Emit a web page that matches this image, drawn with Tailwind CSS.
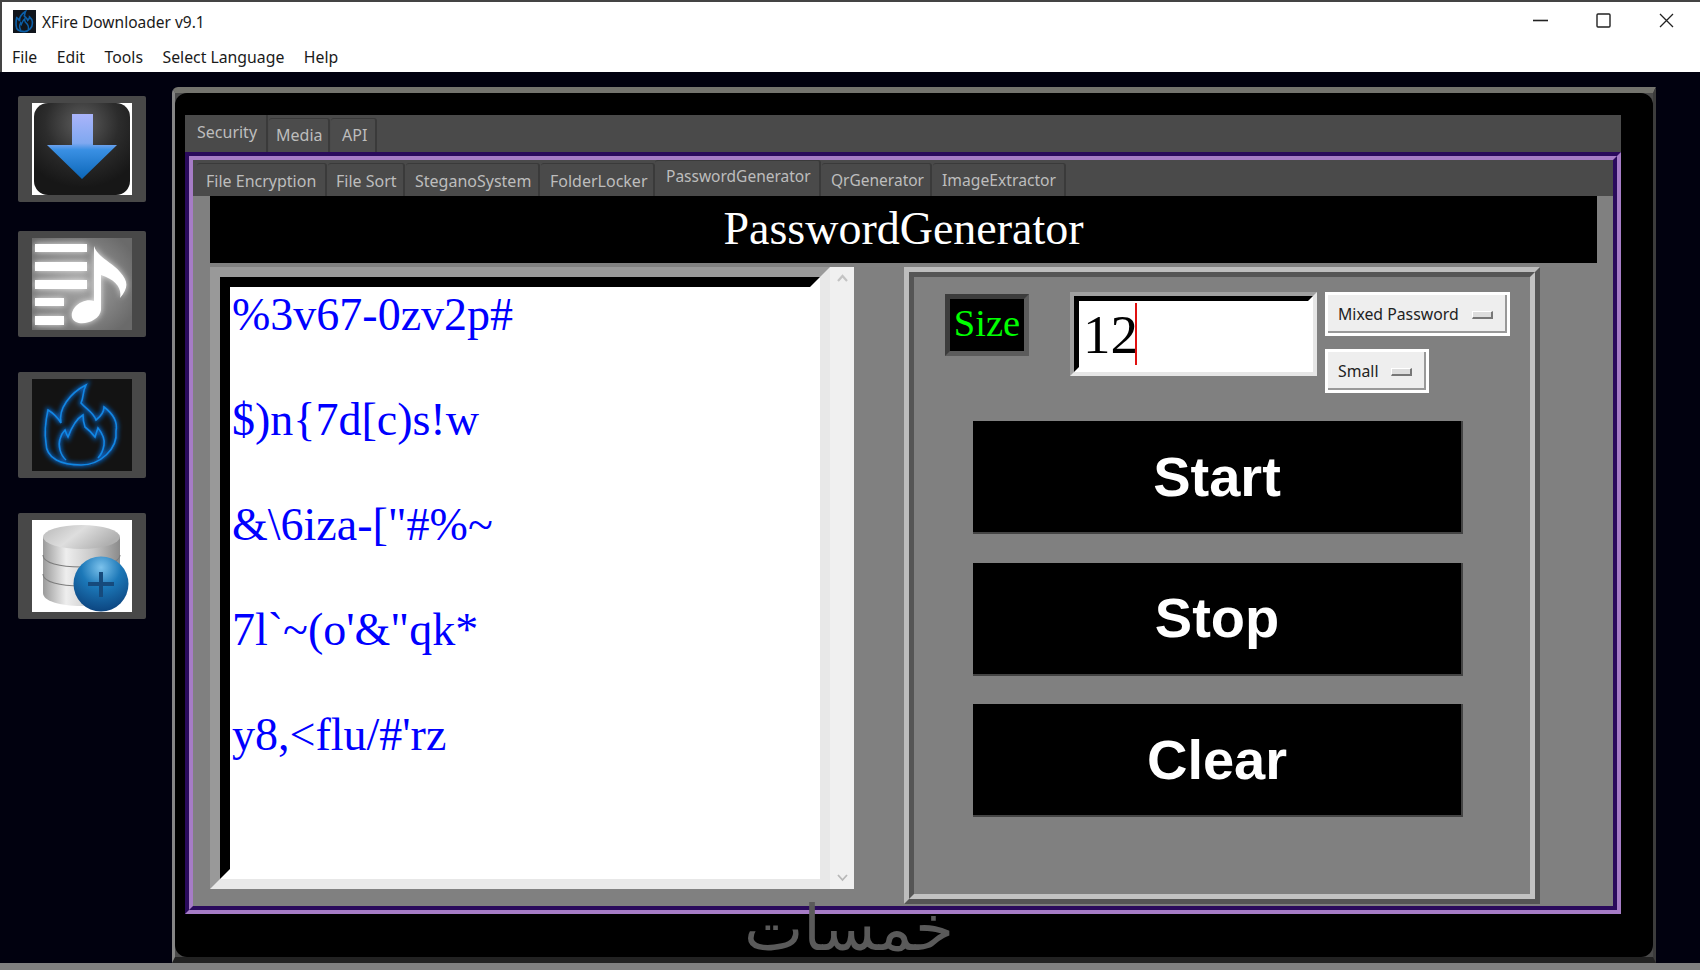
<!DOCTYPE html>
<html lang="en">
<head>
    <meta charset="utf-8" />
    <title>XFire Downloader v9.1</title>
    <script src="https://cdn.jsdelivr.net/npm/@tailwindcss/browser@4"></script>
</head>
<body class="bg-[#01010f]">
<div class="w-[1700px] h-[970px] flex flex-col overflow-hidden relative bg-[#01010f] font-['Noto_Sans',sans-serif]">

    <!-- title bar + menu -->
    <div class="h-[72px] shrink-0 bg-white border-t-2 border-l-2 border-[#444] text-[#1a1a1a]">
        <div class="h-[38px] flex items-center pl-[11px]">
            <svg class="w-[23px] h-[23px]" viewBox="0 0 100 92" preserveAspectRatio="none">
                <rect width="100" height="92" fill="#10151c" />
                <path d="M49 86C30 86 14 80 14 64C12 52 14 40 16 31C21 34 26 39 29 44C26 30 38 14 54 6C50 14 52 18 49 24C54 30 62 34 64 41C68 38 72 34 72 28C80 34 86 42 84 52C86 70 68 86 49 86Z" fill="none" stroke="#0b5fa8" stroke-width="7" />
                <path d="M34 81C28 72 28 60 33 51C34 54 35 56 36 58C39 50 44 40 51 36C51 42 52 45 53 48C60 54 72 60 66 79" fill="none" stroke="#0b5fa8" stroke-width="6" />
            </svg>
            <span class="ml-[6px] mt-[3px] text-[15.500px]">XFire Downloader v9.1</span>
        </div>
        <div class="h-[32px] flex items-center pl-[10px] pt-[4px] gap-[19.500px] text-[15.800px]">
            <span>File</span><span>Edit</span><span>Tools</span><span>Select Language</span><span>Help</span>
        </div>
        <div class="absolute top-[2px] right-0 h-[36px] flex items-center pr-[26px] gap-[47px]">
            <svg class="w-[15px] h-[15px] mr-[1px]" viewBox="0 0 15 15"><path d="M0 7.500H15" stroke="#222" stroke-width="1.600" /></svg>
            <svg class="w-[15px] h-[15px] mr-[1px]" viewBox="0 0 15 15"><rect x="1" y="1" width="13" height="13" rx="1" fill="none" stroke="#222" stroke-width="1.400" /></svg>
            <svg class="w-[15px] h-[15px]" viewBox="0 0 15 15"><path d="M1 1L14 14M14 1L1 14" stroke="#222" stroke-width="1.300" /></svg>
        </div>
    </div>

    <div class="flex flex-1 min-h-0">
        <!-- left toolbar -->
        <div class="w-[172px] shrink-0 pl-[18px] pt-[24px]">
            <div class="w-[128px] h-[106px] bg-[#484848] rounded-[2px] flex items-center justify-center">
                <svg class="w-[100px] h-[92px]" viewBox="0 0 100 92">
                    <defs>
                        <radialGradient id="dlbg" cx="50%" cy="22%" r="70%">
                            <stop offset="0" stop-color="#5e5e5e" /><stop offset="0.55" stop-color="#2c2c2c" /><stop offset="1" stop-color="#171717" />
                        </radialGradient>
                        <linearGradient id="dlarrow" x1="0" y1="0" x2="0" y2="1">
                            <stop offset="0" stop-color="#aab4fa" /><stop offset="0.45" stop-color="#7fa8f0" /><stop offset="0.55" stop-color="#3a90e4" /><stop offset="1" stop-color="#0b66b8" />
                        </linearGradient>
                    </defs>
                    <rect width="100" height="92" fill="#fff" />
                    <rect x="2" y="0" width="96" height="92" rx="14" fill="url(#dlbg)" />
                    <path d="M40 11H61V42H85L50 76L15 42H40Z" fill="url(#dlarrow)" />
                </svg>
            </div>

            <div class="w-[128px] h-[106px] mt-[29px] bg-[#484848] rounded-[2px] flex items-center justify-center">
                <svg class="w-[100px] h-[92px]" viewBox="0 0 100 92">
                    <defs>
                        <radialGradient id="notebg" cx="45%" cy="50%" r="65%">
                            <stop offset="0" stop-color="#a8a8a8" /><stop offset="1" stop-color="#6a6a6a" />
                        </radialGradient>
                        <filter id="noteglow" x="-20%" y="-20%" width="140%" height="140%"><feGaussianBlur stdDeviation="3" /></filter>
                    </defs>
                    <rect width="100" height="92" fill="url(#notebg)" />
                    <g fill="#fff" filter="url(#noteglow)" opacity="0.8">
                        <rect x="3" y="6" width="52" height="8" /><rect x="3" y="24" width="52" height="9" /><rect x="3" y="42" width="52" height="9" /><rect x="3" y="60" width="29" height="8" /><rect x="3" y="78" width="29" height="9" />
                        <path d="M62 8C66 20 80 24 88 34C97 44 96 50 88 60C90 50 84 42 69 37V72C68 82 52 88 44 84C36 80 40 68 50 64C54 62 59 62 62 63Z" />
                    </g>
                    <g fill="#fff">
                        <rect x="3" y="6" width="52" height="8" /><rect x="3" y="24" width="52" height="9" /><rect x="3" y="42" width="52" height="9" /><rect x="3" y="60" width="29" height="8" /><rect x="3" y="78" width="29" height="9" />
                        <path d="M62 8C66 20 80 24 88 34C97 44 96 50 88 60C90 50 84 42 69 37V72C68 82 52 88 44 84C36 80 40 68 50 64C54 62 59 62 62 63Z" />
                    </g>
                </svg>
            </div>

            <div class="w-[128px] h-[106px] mt-[35px] bg-[#484848] rounded-[2px] flex items-center justify-center">
                <svg class="w-[100px] h-[92px]" viewBox="0 0 100 92">
                    <defs><filter id="fireglow" x="-20%" y="-20%" width="140%" height="140%"><feGaussianBlur stdDeviation="2" /></filter></defs>
                    <rect width="100" height="92" fill="#131313" />
                    <g fill="none" stroke="#0a5fb8" stroke-width="4" filter="url(#fireglow)">
                        <path d="M49 86C30 86 14 80 14 64C12 52 14 40 16 31C21 34 26 39 29 44C26 30 38 14 54 6C50 14 52 18 49 24C54 30 62 34 64 41C68 38 72 34 72 28C80 34 86 42 84 52C86 70 68 86 49 86Z" />
                        <path d="M34 81C28 76 26 66 28 60C29 56 31 53 33 51C34 54 35 56 36 58C39 50 44 40 51 36C51 42 52 45 53 48C57 51 60 54 63 58C64 55 65 52 66 49C70 54 73 60 72 66C71 72 69 76 66 79" />
                    </g>
                    <g fill="none" stroke="#1187e4" stroke-width="1.600">
                        <path d="M49 86C30 86 14 80 14 64C12 52 14 40 16 31C21 34 26 39 29 44C26 30 38 14 54 6C50 14 52 18 49 24C54 30 62 34 64 41C68 38 72 34 72 28C80 34 86 42 84 52C86 70 68 86 49 86Z" />
                        <path d="M34 81C28 76 26 66 28 60C29 56 31 53 33 51C34 54 35 56 36 58C39 50 44 40 51 36C51 42 52 45 53 48C57 51 60 54 63 58C64 55 65 52 66 49C70 54 73 60 72 66C71 72 69 76 66 79" />
                    </g>
                </svg>
            </div>

            <div class="w-[128px] h-[106px] mt-[35px] bg-[#484848] rounded-[2px] flex items-center justify-center">
                <svg class="w-[100px] h-[92px]" viewBox="0 0 100 92">
                    <defs>
                        <linearGradient id="dbside" x1="0" y1="0" x2="1" y2="0">
                            <stop offset="0" stop-color="#9a9a9a" /><stop offset="0.3" stop-color="#eee" /><stop offset="0.65" stop-color="#c8c8c8" /><stop offset="1" stop-color="#8a8a8a" />
                        </linearGradient>
                        <linearGradient id="dbtop" x1="0" y1="0" x2="1" y2="0.4">
                            <stop offset="0" stop-color="#b8b8b8" /><stop offset="0.5" stop-color="#dedede" /><stop offset="1" stop-color="#b0b0b0" />
                        </linearGradient>
                        <radialGradient id="dbball" cx="50%" cy="20%" r="80%">
                            <stop offset="0" stop-color="#7cc2ec" /><stop offset="0.45" stop-color="#1c78b8" /><stop offset="1" stop-color="#0c4580" />
                        </radialGradient>
                    </defs>
                    <rect width="100" height="92" fill="#fff" />
                    <path d="M11 17V73C11 81 28 86 49 86C70 86 88 81 88 73V17Z" fill="url(#dbside)" />
                    <path d="M11 35C11 43 28 47 49 47C70 47 88 43 88 35M11 54C11 62 28 66 49 66C70 66 88 62 88 54" fill="none" stroke="#7c7c7c" stroke-width="1.200" />
                    <ellipse cx="49.500" cy="17" rx="38.500" ry="12" fill="url(#dbtop)" />
                    <circle cx="69" cy="64" r="27.500" fill="url(#dbball)" />
                    <path d="M56 64H82M69 52V77" stroke="#164a7c" stroke-width="4" />
                </svg>
            </div>
        </div>

        <!-- main panel -->
        <div class="w-[1484px] h-[876px] mt-[15px] shrink-0 bg-[#4a4a4a] rounded-tl-[6px] border-t-[6px] border-t-[#74746e] border-l-[3px] border-l-[#858585] border-r-[3px] border-r-[#3c3c3c] border-b-[6px] border-b-[#222]">
            <div class="h-full bg-black rounded-[12px] pl-[10px] pt-[22px]">
            <div class="w-[1436px]">

                <!-- outer tabs -->
                <div class="h-[37px] bg-[#4a4a4a] flex items-end text-[16px] text-[#bdbdbd]">
                    <div class="w-[83px] h-[37px] pl-[12px] pt-[5px] border-r-2 border-[#3a3a3a]">Security</div>
                    <div class="w-[61px] h-[34px] ml-px pl-[7px] pt-[4px] bg-[#4c4c4c] border-t border-r-2 border-[#3a3a3a] rounded-t-[3px]">Media</div>
                    <div class="w-[46px] h-[34px] ml-px pl-[11px] pt-[4px] bg-[#4c4c4c] border-t border-r-2 border-[#3a3a3a] rounded-t-[3px]">API</div>
                </div>

                <!-- purple frame -->
                <div class="h-[762px] border-[4px] border-t-[#2a0a5c] border-l-[#2a0a5c] border-r-[#a67cc6] border-b-[#a67cc6]">
                    <div class="h-full border-[4px] border-t-[#a67cc6] border-l-[#a67cc6] border-r-[#2a0a5c] border-b-[#2a0a5c] bg-[#808080]">

                        <!-- inner tabs -->
                        <div class="h-[36px] bg-[#4a4a4a] flex items-end pl-[4px] text-[16px] text-[#bdbdbd]">
                            <div class="w-[130px] h-[33px] pl-[9px] pt-[5px] border-t border-r-2 border-[#3a3a3a] rounded-t-[3px] whitespace-nowrap">File Encryption</div>
                            <div class="w-[77px] h-[33px] ml-[1px] pl-[8px] pt-[5px] border-t border-r-2 border-[#3a3a3a] rounded-t-[3px] whitespace-nowrap">File Sort</div>
                            <div class="w-[134px] h-[33px] ml-[1px] pl-[9px] pt-[5px] border-t border-r-2 border-[#3a3a3a] rounded-t-[3px] whitespace-nowrap">SteganoSystem</div>
                            <div class="w-[114px] h-[33px] ml-[1px] pl-[9px] pt-[5px] border-t border-r-2 border-[#3a3a3a] rounded-t-[3px] whitespace-nowrap">FolderLocker</div>
                            <div class="w-[166px] h-[36px] pl-[11px] pt-[4px] text-[15.500px] border-t border-r-2 border-[#3a3a3a] rounded-t-[3px] whitespace-nowrap">PasswordGenerator</div>
                            <div class="w-[110px] h-[33px] ml-[1px] pl-[9px] pt-[5px] text-[15.500px] border-t border-r-2 border-[#3a3a3a] rounded-t-[3px] whitespace-nowrap">QrGenerator</div>
                            <div class="w-[133px] h-[33px] ml-[1px] pl-[9px] pt-[5px] text-[15.700px] border-t border-r-2 border-[#3a3a3a] rounded-t-[3px] whitespace-nowrap">ImageExtractor</div>
                        </div>

                        <!-- heading -->
                        <div class="h-[67px] w-[1387px] ml-[17px] bg-black text-white text-center text-[46px] leading-[66px] font-['Liberation_Serif',serif]">PasswordGenerator</div>

                        <div class="flex items-start ml-[17px] mt-[4px]">
                            <!-- generated list -->
                            <div class="flex w-[644px] h-[622px]">
                                <div class="w-[620px] h-full border-[10px] border-t-[#999] border-l-[#999] border-r-[#e8e8e8] border-b-[#e8e8e8]">
                                    <div class="h-full border-[10px] border-t-black border-l-black border-r-white border-b-white bg-white pl-[2px] pt-[2px] text-[46px] leading-[52.500px] text-[#0000ff] font-['Liberation_Serif',serif] whitespace-nowrap">
                                        <p class="mb-[52.500px]">%3v67-0zv2p#</p>
                                        <p class="mb-[52.500px]">$)n{7d[c)s!w</p>
                                        <p class="mb-[52.500px]">&amp;\6iza-["#%~</p>
                                        <p class="mb-[52.500px]">7l`~(o'&amp;"qk*</p>
                                        <p>y8,&lt;flu/#'rz</p>
                                    </div>
                                </div>
                                <div class="w-[24px] h-full bg-[#f0f0f0] flex flex-col justify-between items-center py-[7px]">
                                    <svg class="w-[11px] h-[8px]" viewBox="0 0 11 8"><path d="M1 7L5.500 2L10 7" fill="none" stroke="#c4c4c4" stroke-width="2.200" /></svg>
                                    <svg class="w-[11px] h-[8px]" viewBox="0 0 11 8"><path d="M1 1L5.500 6L10 1" fill="none" stroke="#b8b8b8" stroke-width="1.800" /></svg>
                                </div>
                            </div>

                            <!-- controls -->
                            <div class="w-[636px] h-[637px] ml-[50px] border-[5px] border-t-[#bdbdbd] border-l-[#bdbdbd] border-r-[#555] border-b-[#555]">
                                <div class="h-full border-[5px] border-t-[#555] border-l-[#555] border-r-[#c2c2c2] border-b-[#c2c2c2] pl-[59px] pt-[15px]">
                                    <div class="flex items-start">
                                        <div class="w-[84px] h-[62px] mt-[2px] -ml-[28px] border-[5px] border-t-[#3c3c3c] border-l-[#3c3c3c] border-r-[#5c5c5c] border-b-[#5c5c5c] bg-black text-[#00ff00] text-[38.500px] leading-[48px] text-center font-['Liberation_Serif',serif] overflow-hidden">Size</div>
                                        <div class="w-[247px] h-[84px] ml-[41px] border-[4px] border-t-[#a0a0a0] border-l-[#a0a0a0] border-r-[#e6e6e6] border-b-[#e6e6e6]">
                                            <div class="h-full border-[5px] border-t-black border-l-black border-r-white border-b-white bg-white flex items-center pl-[4px] text-black text-[55px] leading-none font-['Liberation_Serif',serif]">
                                                <span>12</span><span class="w-[2px] h-[62px] -ml-[3px] bg-[#e01010]"></span>
                                            </div>
                                        </div>
                                        <div class="ml-[8px] flex flex-col items-start gap-[13px] text-[15.800px] text-[#222]">
                                            <div class="w-[185px] h-[44px] pt-[1px] border-[3px] border-white bg-[#eee] shadow-[inset_-2px_-2px_0_#999] flex items-center justify-between pl-[10px] pr-[14px]">
                                                <span>Mixed Password</span><span class="w-[21px] h-[8px] bg-[#ddd] border-t border-l border-white border-r-2 border-b-2 border-r-[#777] border-b-[#777]"></span>
                                            </div>
                                            <div class="w-[104px] h-[44px] pt-[1px] border-[3px] border-white bg-[#eee] shadow-[inset_-2px_-2px_0_#999] flex items-center justify-between pl-[10px] pr-[14px]">
                                                <span>Small</span><span class="w-[21px] h-[8px] bg-[#ddd] border-t border-l border-white border-r-2 border-b-2 border-r-[#777] border-b-[#777]"></span>
                                            </div>
                                        </div>
                                    </div>
                                    <div class="flex flex-col gap-[28.500px] w-[490px] mt-[28px] text-white font-bold text-[56px] font-['Liberation_Sans',sans-serif]">
                                        <div class="h-[113px] bg-black border-r-2 border-b-2 border-[#444] flex items-center justify-center">Start</div>
                                        <div class="h-[113px] bg-black border-r-2 border-b-2 border-[#444] flex items-center justify-center">Stop</div>
                                        <div class="h-[113px] bg-black border-r-2 border-b-2 border-[#444] flex items-center justify-center">Clear</div>
                                    </div>
                                </div>
                            </div>
                        </div>
                    </div>
                </div>
            </div>
            </div>
        </div>
    </div>

    <div class="h-[7px] shrink-0 bg-[#808080]"></div>

    <!-- watermark sits over the panel -->
    <div dir="rtl" lang="ar" class="absolute left-[746px] top-[894px] w-[208px] text-center text-[63px] leading-[70px] text-[#5a5a5a] font-['DejaVu_Sans',sans-serif] whitespace-nowrap">خمسات</div>
</div>
</body>
</html>
